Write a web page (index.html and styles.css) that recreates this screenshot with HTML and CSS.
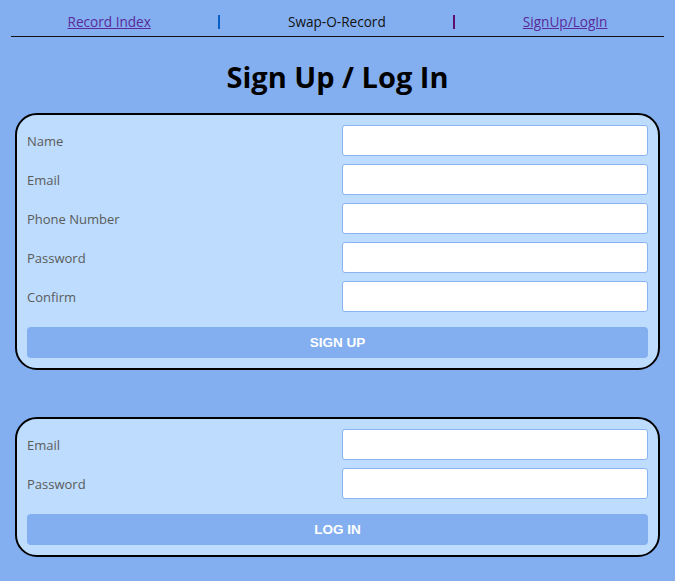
FILE: index.html
```html
<!DOCTYPE html>
<html>
<head>
<meta charset="utf-8">
<link rel="stylesheet" href="styles.css">
</head>
<body>
<nav class="nav">
  <a href="#" class="nav-link">Record Index</a>
  <span class="sep sep-blue"></span>
  <span class="brand">Swap-O-Record</span>
  <span class="sep sep-purple"></span>
  <a href="#" class="nav-link">SignUp/LogIn</a>
</nav>
<div class="rule"></div>
<h1 class="title">Sign Up / Log In</h1>
<main class="main">
  <form class="card">
    <div class="row"><label class="label">Name</label><input class="field" type="text"></div>
    <div class="row"><label class="label">Email</label><input class="field" type="text"></div>
    <div class="row"><label class="label">Phone Number</label><input class="field" type="text"></div>
    <div class="row"><label class="label">Password</label><input class="field" type="password"></div>
    <div class="row"><label class="label">Confirm</label><input class="field" type="password"></div>
    <button class="btn" type="button">SIGN UP</button>
  </form>
  <form class="card card-login">
    <div class="row"><label class="label">Email</label><input class="field" type="text"></div>
    <div class="row"><label class="label">Password</label><input class="field" type="password"></div>
    <button class="btn" type="button">LOG IN</button>
  </form>
</main>
</body>
</html>
```
FILE: styles.css
```css
html, body {
  margin: 0;
  padding: 0;
  background: #83aff0;
  font-family: "Open Sans", "Noto Sans", sans-serif;
}
.nav {
  display: flex;
  justify-content: space-evenly;
  align-items: center;
  padding-top: 12px;
  height: 20px;
  font-size: 13.6px;
  line-height: 20px;
}
.nav-link {
  color: #5a2a9a;
  text-decoration: underline;
}
.brand {
  color: #111;
}
.sep {
  display: block;
  width: 2px;
  height: 14px;
}
.sep-blue { background: #0a5fc4; }
.sep-purple { background: #5e0f6e; }
.rule {
  margin: 4px 11px 0;
  height: 1px;
  background: #111;
}
.title {
  margin: 23px 0 19px;
  text-align: center;
  font-size: 29px;
  font-weight: 700;
  line-height: 34px;
  color: #000;
}
.main {
  padding: 0 15px;
}
.card {
  background: #bddcfe;
  border: 2px solid #000;
  border-radius: 22px;
  padding: 10px;
  display: flex;
  flex-direction: column;
  gap: 8px;
  margin: 0 0 47px;
}
.row {
  display: flex;
  align-items: center;
  justify-content: space-between;
  height: 31px;
}
.label {
  font-size: 13px;
  color: #5b5b5b;
}
.field {
  width: 306px;
  height: 31px;
  box-sizing: border-box;
  border: 1px solid #8ab3f2;
  border-radius: 3px;
  background: #fff;
  margin: 0;
}
.btn {
  margin-top: 7px;
  height: 31px;
  border: none;
  border-radius: 4px;
  background: #83aff0;
  color: #fff;
  font-family: "Liberation Sans", Arial, sans-serif;
  font-weight: 700;
  font-size: 13.5px;
}
```
